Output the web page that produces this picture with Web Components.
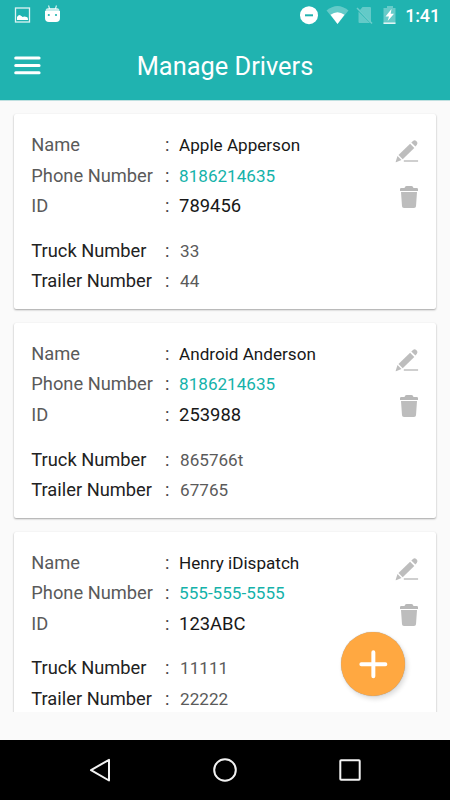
<!DOCTYPE html>
<html lang="en">
<head>
<meta charset="utf-8">
<title>Manage Drivers</title>
<style>
html,body{margin:0;height:100%}
body{font-family:Roboto,"Noto Sans",sans-serif;background:#fafafa;overflow:hidden}
</style>
</head>
<body>
<driver-app></driver-app>
<script>
const define = (name, html, setup) => {
  const tpl = document.createElement('template');
  tpl.innerHTML = html;
  customElements.define(name, class extends HTMLElement {
    connectedCallback() {
      if (this.shadowRoot) return;
      const root = this.attachShadow({ mode: 'open' });
      root.append(tpl.content.cloneNode(true));
      if (setup) setup(this, root);
    }
  });
};

define('status-bar', `
<style>
:host{display:flex;height:31px;align-items:center;box-sizing:border-box;padding:0 10px 0 14px;color:#fff}
svg{display:block;flex:none}
.sp{flex:1}
.time{font-size:18px;line-height:31px;font-weight:500;margin-left:8px;letter-spacing:-.15px}
</style>
<svg width="17" height="31" viewBox="0 0 17 31"><rect x="1.500" y="8" width="14" height="14" fill="none" stroke="#fff" stroke-opacity=".85" stroke-width="1.300"/><path d="M3 20v-3q1-2 3-2l1 1q1 0 1.500 1 2-1 4 0 1.500 0 1.500 3z" fill="#fff"/></svg>
<svg width="17" height="31" viewBox="0 0 17 31" style="margin-left:13px"><path d="M4.500 5.500l1.200 3.500M12.500 5.500l-1.200 3.500" stroke="#fff" stroke-opacity=".8" stroke-width="1.200"/><path d="M1.500 11Q1.500 8 5 8h7q3.500 0 3.500 3z" fill="#fff" fill-opacity=".75"/><path d="M1 11h15v7q0 4-4 4H5q-4 0-4-4z" fill="#fff"/><circle cx="4.800" cy="15" r="1.100" fill="#20b3b0"/><circle cx="12" cy="15" r="1.100" fill="#20b3b0"/></svg>
<span class="sp"></span>
<svg width="18" height="31" viewBox="0 0 18 31"><circle cx="9" cy="15.200" r="9" fill="#fff"/><path d="M5 15.300h8" stroke="#20b3b0" stroke-width="2"/></svg>
<svg width="23" height="31" viewBox="0 0 23 31" style="margin-left:8px"><path d="M.5 10.500Q11.500 1.500 22.500 10.500L11.500 24z" fill="#fff" fill-opacity=".3"/><path d="M4.500 14.800Q11.500 9.800 18.500 14.800L11.500 24z" fill="#fff"/></svg>
<svg width="18" height="31" viewBox="0 0 18 31" style="margin-left:7px"><path d="M6.500 7H14q1 0 1 1v13.500L4 10z M2.500 11.500L14 23H3.500q-1 0-1-1z" fill="#fff" fill-opacity=".3"/><path d="M1 8l15 15.500" stroke="#fff" stroke-opacity=".35" stroke-width="1.500"/></svg>
<svg width="14" height="31" viewBox="0 0 14 31" style="margin-left:9.500px"><path d="M4 6h6v2h2.500v15.500h-12V8H4z" fill="#fff" fill-opacity=".32"/><path d="M8.500 9L2.500 16.500H6L4.700 21 11 13.800H7.700z" fill="#fff"/><path d="M.5 23.200h12" stroke="#fff" stroke-width="1.300"/></svg>
<span class="time">1:41</span>`);

define('title-bar', `
<style>
:host{display:grid;grid-template-columns:56px 1fr 56px;align-items:center;height:69px}
svg{display:block;margin-left:14px}
h1{margin:0;padding-top:2px;font-size:25.400px;font-weight:400;line-height:67px;color:#fff;text-align:center;white-space:nowrap}
</style>
<svg width="28" height="22" viewBox="0 0 28 22"><path d="M1.700 3h23.400M1.700 10.500h23.400M1.700 17.800h23.400" stroke="#fff" stroke-width="3" stroke-linecap="round"/></svg>
<h1><slot></slot></h1>`);

define('info-row', `
<style>
:host{display:grid;grid-template-columns:133.600px 14.200px 1fr;height:30.400px;line-height:30.400px;font-size:18.300px;color:#5a5a5a;white-space:nowrap}
.v{font-size:17.100px;color:#181818}
:host([kind=phone]) .v{color:#14b2aa}
:host([kind=id]) .v{font-size:18.400px}
:host([kind=vehicle]) .k{color:#222}
:host([kind=vehicle]) .v{color:#5a5a5a;padding-left:1px}
.c{color:#444}
</style>
<span class="k"></span><span class="c">:</span><span class="v"><slot></slot></span>`,
(el, root) => { root.querySelector('.k').textContent = el.getAttribute('label'); });

define('card-actions', `
<style>
:host{display:flex;flex-direction:column;align-items:flex-end;width:24px}
svg{display:block}
</style>
<svg width="24" height="24" viewBox="0 0 24 24"><g fill="#bdbdbd"><path d="M15.100 4.700l4.200 4.200L7.700 20.200 3.500 16z"/><path d="M16.300 3.500L18 1.900q1.600-1.400 3.300.2l.4.400q1.500 1.600.2 3.200L20.400 7.500z"/><path d="M2.500 17.100l4 4-5.500 2.200q-.5 0-.3-.6z"/></g><path d="M8.800 22h14.300" stroke="#c4c4c4" stroke-width="1.600"/></svg>
<svg width="20" height="24" viewBox="0 0 20 24" style="margin-top:22px"><path d="M1 6V4.200Q1 3 2.200 3H5.500Q6 1 7.500 1h5Q14 1 14.500 3h3.300Q19 3 19 4.200V6z" fill="#b8b8b8"/><path d="M2 7h16l-1 14.200q-.1 1.800-2 1.800H5q-1.900 0-2-1.800z" fill="#bdbdbd"/></svg>`);

define('driver-card', `
<style>
:host{display:flex;box-sizing:border-box;height:195px;flex:none;background:#fff;border-radius:2px;padding:16.300px 17px 0 17.300px;box-shadow:0 1px 2px rgba(0,0,0,.34),0 0 1px rgba(0,0,0,.05)}
.rows{flex:1}
.gap{height:14.300px}
card-actions{margin-top:8.700px}
</style>
<div class="rows"><slot></slot><div class="gap"></div><slot name="vehicle"></slot></div>
<card-actions></card-actions>`);

define('add-button', `
<style>
:host{display:block;width:64.500px;height:64.500px;border-radius:50%;background:#ffa841;box-shadow:2px 3px 5px rgba(0,0,0,.14),0 0 1px rgba(0,0,0,.4)}
svg{display:block}
</style>
<svg width="64.500" height="64.500" viewBox="0 0 65 65"><path d="M20.500 32.500h24.200M32.600 20.400v24.200" stroke="#fff" stroke-width="4" stroke-linecap="round"/></svg>`);

define('nav-bar', `
<style>
:host{display:flex;height:60px;background:#000;align-items:center;justify-content:center;gap:95px}
svg{display:block}
</style>
<svg width="30" height="30" viewBox="0 0 30 30"><path d="M24 4.800v20.700L6 15.100z" fill="none" stroke="#f2f2f2" stroke-width="2" stroke-linejoin="round"/></svg>
<svg width="30" height="30" viewBox="0 0 30 30"><circle cx="15" cy="15" r="10.800" fill="none" stroke="#f2f2f2" stroke-width="2"/></svg>
<svg width="30" height="30" viewBox="0 0 30 30"><rect x="5.300" y="5.300" width="19.400" height="19.400" rx=".8" fill="none" stroke="#f2f2f2" stroke-width="2"/></svg>`);

define('driver-app', `
<style>
:host{display:flex;flex-direction:column;height:800px;width:450px;position:relative;background:#fafafa}
header{background:#20b3b0;flex:none;height:100px;box-shadow:0 1px 0 #bfe0e0}
main{display:flex;flex-direction:column;gap:13.800px;height:611px;margin-top:1px;padding:13px 14px 0;box-sizing:border-box;overflow:hidden}
.foot{flex:1}
add-button{position:absolute;left:340.700px;top:631.700px}
</style>
<header><status-bar></status-bar><title-bar>Manage Drivers</title-bar></header>
<main></main><div class="foot"></div><nav-bar></nav-bar><add-button></add-button>`,
(el, root) => {
  const drivers = [
    ['Apple Apperson', '8186214635', '789456', '33', '44'],
    ['Android Anderson', '8186214635', '253988', '865766t', '67765'],
    ['Henry iDispatch', '555-555-5555', '123ABC', '11111', '22222']
  ];
  root.querySelector('main').innerHTML = drivers.map(([name, phone, id, truck, trailer]) => `<driver-card>
<info-row label="Name">${name}</info-row>
<info-row label="Phone Number" kind="phone">${phone}</info-row>
<info-row label="ID" kind="id">${id}</info-row>
<info-row slot="vehicle" label="Truck Number" kind="vehicle">${truck}</info-row>
<info-row slot="vehicle" label="Trailer Number" kind="vehicle">${trailer}</info-row>
</driver-card>`).join('');
});
</script>
</body>
</html>
